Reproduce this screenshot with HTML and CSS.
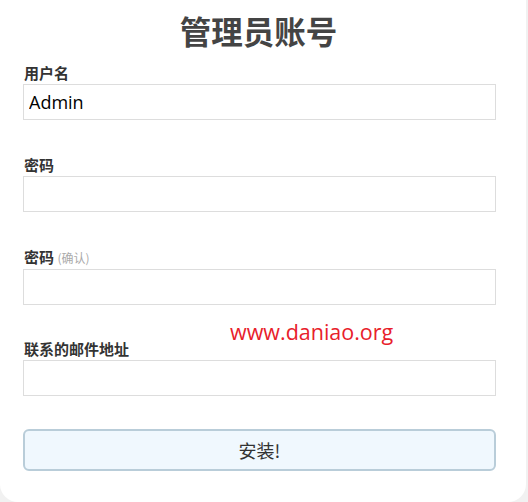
FILE: index.html
```html
<!DOCTYPE html>
<html lang="zh">
<head>
<meta charset="utf-8">
<title>管理员账号</title>
<link rel="stylesheet" href="styles.css">
</head>
<body>
<div class="panel">
  <h1 class="title">管理员账号</h1>
  <form class="form">
    <div class="field">
      <label class="label">用户名</label>
      <input class="input" type="text" value="Admin">
    </div>
    <div class="field">
      <label class="label">密码</label>
      <input class="input" type="password">
    </div>
    <div class="field field-tight">
      <label class="label">密码 <span class="hint">(确认)</span></label>
      <input class="input" type="password">
    </div>
    <div class="field field-last">
      <label class="label">联系的邮件地址</label>
      <input class="input" type="text">
    </div>
    <button class="submit" type="button">安装!</button>
  </form>
  <div class="watermark">www.daniao.org</div>
</div>
</body>
</html>
```
FILE: styles.css
```css
html, body {
  margin: 0;
  padding: 0;
  background: #f1f1f1;
}
body {
  font-family: "Noto Sans CJK SC", "Noto Sans", sans-serif;
  color: #333;
}
.panel {
  position: relative;
  width: 526px;
  height: 502px;
  box-sizing: border-box;
  background: #fff;
  border-radius: 0 0 18px 18px;
  padding: 8px 32px 0 23px;
}
.title {
  margin: 0 0 10px;
  text-align: center;
  font-size: 31.5px;
  line-height: 44px;
  font-weight: 700;
  color: #444;
}
.form {
  display: flex;
  flex-direction: column;
}
.field {
  display: flex;
  flex-direction: column;
  margin-bottom: 34px;
}
.field-tight {
  margin-bottom: 33px;
}
.field-last {
  margin-bottom: 33px;
}
.label {
  display: block;
  font-size: 15px;
  line-height: 22px;
  font-weight: 700;
  color: #333;
  padding-left: 1px;
}
.hint {
  font-size: 12px;
  font-weight: 400;
  color: #aaa;
}
.input {
  width: 473px;
  height: 36px;
  box-sizing: border-box;
  border: 1px solid #dddddd;
  margin: 0;
  padding: 0 5px;
  font-family: "Open Sans", "Noto Sans", sans-serif;
  font-size: 18px;
  color: #000;
  background: #fff;
  outline: none;
}
.submit {
  width: 473px;
  height: 42px;
  box-sizing: border-box;
  border: 2px solid #b9cdd9;
  border-radius: 6px;
  background: #f0f8fe;
  font-family: "Noto Sans CJK SC", sans-serif;
  font-size: 18px;
  color: #333;
  padding: 0;
}
.watermark {
  position: absolute;
  left: 230px;
  top: 317px;
  font-family: "Open Sans", "Noto Sans", sans-serif;
  font-size: 21.5px;
  line-height: 30px;
  color: #e8202a;
}
```
